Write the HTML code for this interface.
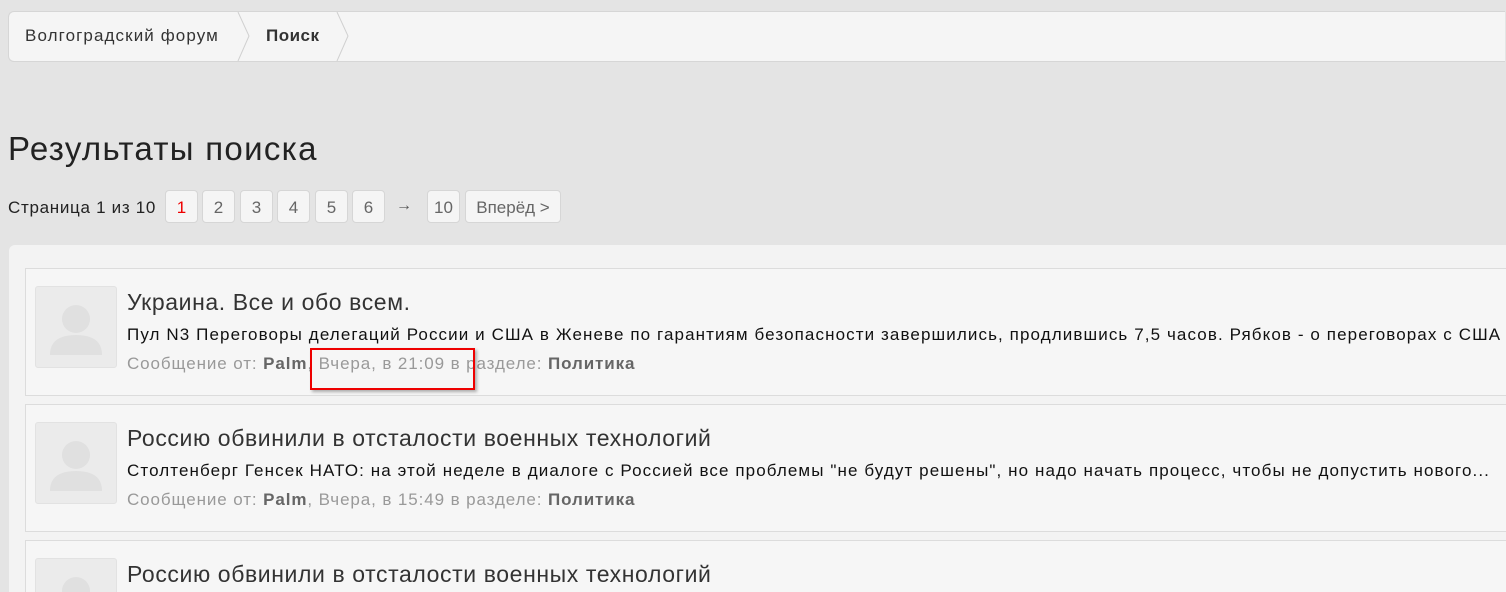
<!DOCTYPE html>
<html style="overflow:hidden;height:592px"><head><meta charset="utf-8"><style>
body{margin:0;width:1506px;height:592px;overflow:hidden;background:#e4e4e4;font-family:"Liberation Sans",sans-serif;color:#222;position:relative}
.bc{position:absolute;left:8px;top:11px;width:1496px;height:49px;background:#f5f5f5;border:1px solid #d6d6d6;border-radius:6px 0 0 6px;border-right:none}
.bc span{position:absolute;top:14px;font-size:17px;color:#333;letter-spacing:1.1px;white-space:nowrap}
.chev{position:absolute;top:0}
h1{position:absolute;left:8px;top:130px;margin:0;font-weight:normal;font-size:33px;color:#222;letter-spacing:1.3px;white-space:nowrap}
.pg{position:absolute;top:190px;height:33px;font-size:16px}
.pg .lbl{position:absolute;left:8px;top:8px;white-space:nowrap;letter-spacing:0.7px;font-size:17px}
.b{position:absolute;top:0;height:33px;border:1px solid #d6d6d6;border-radius:4px;background:#f5f5f5;text-align:center;line-height:33px;color:#666;box-sizing:border-box;white-space:nowrap;font-size:17px}
.panel{position:absolute;left:9px;top:245px;width:1497px;height:347px;background:#f3f3f3;border-radius:6px 0 0 0}
.it{position:absolute;left:25px;width:1481px;height:126px;background:#f6f6f6;border:1px solid #dcdcdc;border-right:none;overflow:hidden}
.av{position:absolute;left:9px;top:17px;width:80px;height:80px;background:#ebebeb;border:1px solid #e2e2e2;border-radius:3px;overflow:hidden}
.t{position:absolute;left:101px;top:20px;font-size:23px;color:#333;white-space:nowrap;letter-spacing:0.6px}
.s{position:absolute;left:101px;top:56px;font-size:17px;color:#111;white-space:nowrap;letter-spacing:1.1px}
.m{position:absolute;left:101px;top:85px;font-size:17px;color:#999;white-space:nowrap;letter-spacing:0.9px}
.m b{font-weight:bold;color:#666}
</style></head><body>
<div class="bc">
<span style="left:16px">Волгоградский форум</span>
<svg class="chev" style="left:228px" width="14" height="49"><path d="M1 0 L12 24 L1 49" fill="none" stroke="#d0d0d0"/></svg>
<span style="left:257px;font-weight:bold;letter-spacing:0.5px">Поиск</span>
<svg class="chev" style="left:327px" width="14" height="49"><path d="M1 0 L12 24 L1 49" fill="none" stroke="#d0d0d0"/></svg>
</div>
<h1>Результаты поиска</h1>
<div class="pg" style="left:0;width:600px">
<span class="lbl">Страница 1 из 10</span>
<div class="b" style="left:165px;width:33px;color:#e00">1</div>
<div class="b" style="left:202px;width:33px">2</div>
<div class="b" style="left:240px;width:33px">3</div>
<div class="b" style="left:277px;width:33px">4</div>
<div class="b" style="left:315px;width:33px">5</div>
<div class="b" style="left:352px;width:33px">6</div>
<span style="position:absolute;left:396px;top:7px;color:#555">→</span>
<div class="b" style="left:427px;width:33px">10</div>
<div class="b" style="left:465px;width:96px">Вперёд &gt;</div>
</div>
<div class="panel"></div>
<div class="it" style="top:268px">
<div class="av"><svg width="80" height="80"><circle cx="40" cy="32" r="14" fill="#e0e0e0"/><path d="M14 68 Q14 48 40 48 Q66 48 66 68 Z" fill="#e0e0e0"/></svg></div>
<div class="t">Украина. Все и обо всем.</div>
<div class="s">Пул N3 Переговоры делегаций России и США в Женеве по гарантиям безопасности завершились, продлившись 7,5 часов. Рябков - о переговорах с США</div>
<div class="m">Сообщение от: <b>Palm</b>, Вчера, в 21:09 в разделе: <b>Политика</b></div>
<div style="position:absolute;left:284px;top:79px;width:161px;height:38px;border:2px solid #e00;box-shadow:2px 2px 3px rgba(0,0,0,.3)"></div>
</div>
<div class="it" style="top:404px">
<div class="av"><svg width="80" height="80"><circle cx="40" cy="32" r="14" fill="#e0e0e0"/><path d="M14 68 Q14 48 40 48 Q66 48 66 68 Z" fill="#e0e0e0"/></svg></div>
<div class="t">Россию обвинили в отсталости военных технологий</div>
<div class="s">Столтенберг Генсек НАТО: на этой неделе в диалоге с Россией все проблемы "не будут решены", но надо начать процесс, чтобы не допустить нового...</div>
<div class="m">Сообщение от: <b>Palm</b>, Вчера, в 15:49 в разделе: <b>Политика</b></div>
</div>
<div class="it" style="top:540px;height:51px;border-bottom:none">
<div class="av"><svg width="80" height="80"><circle cx="40" cy="32" r="14" fill="#e0e0e0"/><path d="M14 68 Q14 48 40 48 Q66 48 66 68 Z" fill="#e0e0e0"/></svg></div>
<div class="t">Россию обвинили в отсталости военных технологий</div>
</div>
</body></html>
